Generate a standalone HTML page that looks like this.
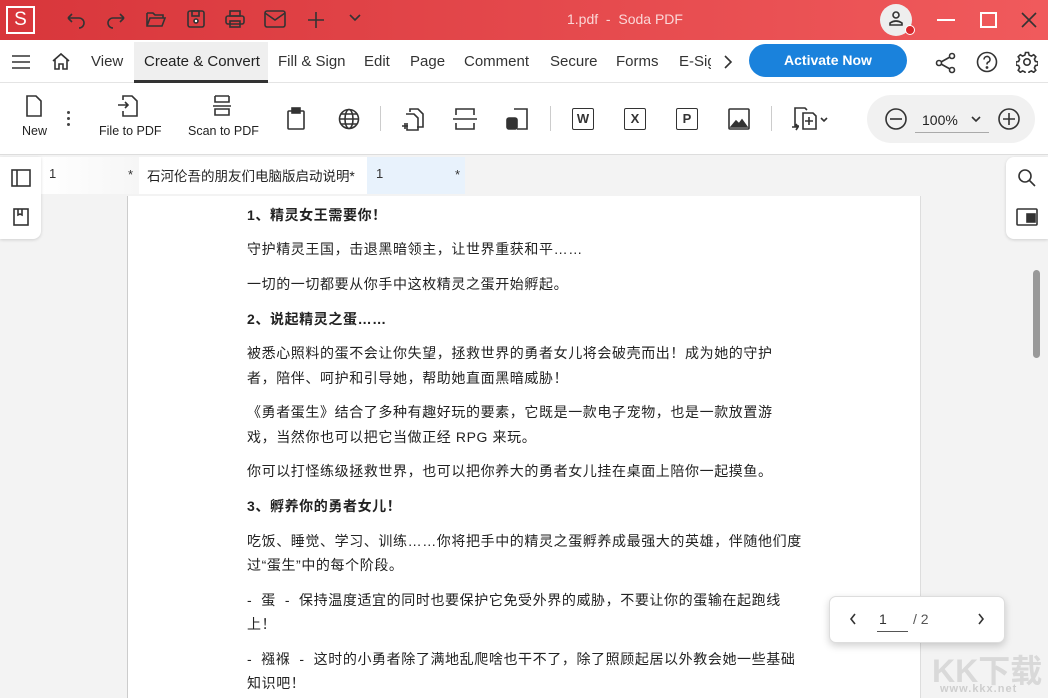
<!DOCTYPE html>
<html><head><meta charset="utf-8"><style>
*{margin:0;padding:0;box-sizing:border-box}
body{width:1048px;height:698px;overflow:hidden;position:relative;font-family:"Liberation Sans","Noto Sans CJK SC",sans-serif;background:#f3f3f3;color:#333}
.abs{position:absolute}
.title{left:0;top:0;width:1048px;height:40px;background:linear-gradient(90deg,#d8363b,#f05a5c)}
.menu{left:0;top:40px;width:1048px;height:43px;background:#fff;border-bottom:1px solid #e4e4e4}
.mi{position:absolute;top:53px;font-size:15px;color:#333;white-space:nowrap}
.tb{left:0;top:83px;width:1048px;height:72px;background:#fff;border-bottom:1px solid #ddd}
.lbl{position:absolute;font-size:12.5px;color:#222;white-space:nowrap}
svg{position:absolute;fill:none;stroke:#333;stroke-width:1.6}
.doc p{position:absolute;left:247px;font-size:14px;letter-spacing:0.6px;color:#222;white-space:nowrap}
.doc b{font-weight:bold}
</style></head><body>
<div class="abs title"></div>
<div class="abs" style="left:6px;top:6px;width:29px;height:28px;border:2px solid #fff;color:#fff;font-size:19px;text-align:center;line-height:24px">S</div>
<svg style="left:64px;top:10px" width="24" height="20" viewBox="0 0 24 20" stroke="#b43034" stroke-width="2"><path d="M4 8h11a5 5 0 0 1 0 10M4 8l4-4M4 8l4 4"/></svg>
<svg style="left:104px;top:10px" width="24" height="20" viewBox="0 0 24 20" stroke="#b43034" stroke-width="2"><path d="M20 8H9a5 5 0 0 0 0 10M20 8l-4-4M20 8l-4 4"/></svg>
<svg style="left:145px;top:9px" width="22" height="20" viewBox="0 0 22 20" stroke="#fff"><path d="M2 4h6l2 2h8v3M2 4v13h15l3-8H5l-3 8"/></svg>
<svg style="left:186px;top:9px" width="20" height="20" viewBox="0 0 20 20" stroke="#fff"><rect x="2" y="2" width="16" height="16" rx="2"/><rect x="6" y="2" width="7" height="5"/><circle cx="10" cy="12" r="2" fill="#fff"/></svg>
<svg style="left:224px;top:9px" width="22" height="20" viewBox="0 0 22 20" stroke="#fff"><rect x="6" y="2" width="10" height="5"/><rect x="2" y="7" width="18" height="8" rx="2"/><rect x="6" y="12" width="10" height="6"/></svg>
<svg style="left:264px;top:10px" width="22" height="18" viewBox="0 0 22 18" stroke="#fff"><rect x="1" y="1" width="20" height="16" rx="2"/><path d="M1 3l10 7 10-7"/></svg>
<svg style="left:306px;top:10px" width="20" height="20" viewBox="0 0 20 20" stroke="#fff" stroke-width="2"><path d="M10 2v16M2 10h16"/></svg>
<svg style="left:348px;top:13px" width="14" height="10" viewBox="0 0 14 10" stroke="#fff" stroke-width="2"><path d="M2 2l5 5 5-5"/></svg>
<div class="abs" style="left:567px;top:11px;font-size:14px;color:#fbd7d7;white-space:nowrap">1.pdf &nbsp;- &nbsp;Soda PDF</div>
<div class="abs" style="left:880px;top:4px;width:32px;height:32px;border-radius:50%;background:#eee"></div>
<svg style="left:887px;top:10px" width="18" height="18" viewBox="0 0 18 18" stroke="#333"><circle cx="9" cy="5" r="3"/><path d="M3 15v-2q6-4 12 0v2z"/></svg>
<div class="abs" style="left:905px;top:25px;width:10px;height:10px;border-radius:50%;background:#d8272c;border:1.5px solid #fff"></div>
<div class="abs" style="left:937px;top:19px;width:18px;height:2px;background:#fff"></div>
<div class="abs" style="left:980px;top:12px;width:17px;height:16px;border:2px solid #fff"></div>
<svg style="left:1020px;top:11px" width="18" height="18" viewBox="0 0 18 18" stroke="#fff" stroke-width="2"><path d="M2 2l14 14M16 2L2 16"/></svg>

<div class="abs menu"></div>
<svg style="left:11px;top:54px" width="20" height="16" viewBox="0 0 20 16" stroke-width="2"><path d="M1 2h18M1 8h18M1 14h18"/></svg>
<svg style="left:51px;top:52px" width="20" height="19" viewBox="0 0 20 19" stroke-width="2"><path d="M2 9l8-7 8 7M4 7v10h4v-5h4v5h4V7"/></svg>
<div class="abs" style="left:134px;top:42px;width:134px;height:41px;background:#efefef;border-bottom:3px solid #333"></div>
<span class="mi" style="left:91px">View</span>
<span class="mi" style="left:144px;color:#222">Create &amp; Convert</span>
<span class="mi" style="left:278px">Fill &amp; Sign</span>
<span class="mi" style="left:364px">Edit</span>
<span class="mi" style="left:410px">Page</span>
<span class="mi" style="left:464px">Comment</span>
<span class="mi" style="left:550px">Secure</span>
<span class="mi" style="left:616px">Forms</span>
<span class="mi" style="left:679px;width:32px;overflow:hidden">E-Sign</span>
<svg style="left:722px;top:54px" width="12" height="16" viewBox="0 0 12 16" stroke-width="2"><path d="M3 2l6 6-6 6"/></svg>
<div class="abs" style="left:749px;top:44px;width:158px;height:33px;border-radius:17px;background:#1a82dc;color:#fff;font-weight:bold;font-size:14px;text-align:center;line-height:32px">Activate Now</div>
<svg style="left:935px;top:52px" width="22" height="22" viewBox="0 0 22 22" stroke-width="1.8"><circle cx="17" cy="4" r="2.5"/><circle cx="4" cy="11" r="2.5"/><circle cx="17" cy="18" r="2.5"/><path d="M6 10l9-5M6 12l9 5"/></svg>
<svg style="left:976px;top:51px" width="22" height="22" viewBox="0 0 22 22" stroke-width="1.8"><circle cx="11" cy="11" r="9.5"/><path d="M8 8.5a3 3 0 1 1 4 2.8c-1 .4-1 1-1 2.2"/><circle cx="11" cy="16.5" r=".6" fill="#333"/></svg>
<svg style="left:1016px;top:51px" width="22" height="22" viewBox="0 0 22 22" stroke-width="1.8"><circle cx="11" cy="11" r="3.2"/><path d="M9.5 1.5h3l.6 2.6 2.3 1 2.3-1.4 2.1 2.1-1.4 2.3 1 2.3 2.6.6v3l-2.6.6-1 2.3 1.4 2.3-2.1 2.1-2.3-1.4-2.3 1-.6 2.6h-3l-.6-2.6-2.3-1-2.3 1.4-2.1-2.1 1.4-2.300-1-2.3-2.6-.6v-3l2.6-.6 1-2.3-1.4-2.3 2.1-2.1 2.3 1.4 2.3-1z"/></svg>

<div class="abs tb"></div>
<svg style="left:25px;top:95px" width="18" height="22" viewBox="0 0 18 22"><path d="M2 1h9l5 5v15H2z"/></svg>
<div class="lbl" style="left:22px;top:124px">New</div>
<div class="abs" style="left:67px;top:117px;width:3px;height:3px;background:#444;border-radius:50%;box-shadow:0 -6px #444,0 6px #444"></div>
<svg style="left:117px;top:95px" width="22" height="22" viewBox="0 0 22 22" stroke-width="1.8"><path d="M6 5V1h9l5 5v15H6v-5M1 10h10M8 7l3 3-3 3"/></svg>
<div class="lbl" style="left:99px;top:124px">File to PDF</div>
<svg style="left:211px;top:95px" width="22" height="22" viewBox="0 0 22 22" stroke-width="1.8"><path d="M4 1h14M4 1v6h14V1M2 11h18M4 14h14v6H4z"/></svg>
<div class="lbl" style="left:188px;top:124px">Scan to PDF</div>
<svg style="left:286px;top:107px" width="20" height="24" viewBox="0 0 20 24" stroke-width="1.8"><rect x="2" y="4" width="16" height="18" rx="1"/><rect x="6" y="1" width="8" height="5" fill="#333"/></svg>
<svg style="left:338px;top:108px" width="22" height="22" viewBox="0 0 22 22" stroke-width="1.6"><circle cx="11" cy="11" r="9.5"/><ellipse cx="11" cy="11" rx="4" ry="9.5"/><path d="M1.5 11h19M3 6h16M3 16h16"/></svg>
<div class="abs" style="left:380px;top:106px;width:1px;height:25px;background:#ccc"></div>
<svg style="left:401px;top:106px" width="26" height="26" viewBox="0 0 26 26" stroke-width="1.8"><path d="M9 6V3h8l5 5v13h-6M5 8h8l4 4v12H6V17M1 20h6M4 17v6"/></svg>
<svg style="left:453px;top:108px" width="24" height="22" viewBox="0 0 24 22" stroke-width="1.8"><path d="M3 7V1h18v6M3 15v6h18v-6M0 11h24"/></svg>
<svg style="left:505px;top:108px" width="24" height="22" viewBox="0 0 24 22" stroke-width="1.8"><path d="M9 1h13v20H12"/><rect x="2" y="10" width="10" height="11" rx="2" fill="#333"/></svg>
<div class="abs" style="left:550px;top:106px;width:1px;height:25px;background:#ccc"></div>
<div class="abs" style="left:572px;top:108px;width:22px;height:22px;border:1.8px solid #333;border-radius:2px;font-size:13px;font-weight:bold;text-align:center;line-height:19px">W</div>
<div class="abs" style="left:624px;top:108px;width:22px;height:22px;border:1.8px solid #333;border-radius:2px;font-size:13px;font-weight:bold;text-align:center;line-height:19px">X</div>
<div class="abs" style="left:676px;top:108px;width:22px;height:22px;border:1.8px solid #333;border-radius:2px;font-size:13px;font-weight:bold;text-align:center;line-height:19px">P</div>
<svg style="left:728px;top:108px" width="22" height="22" viewBox="0 0 22 22" stroke-width="1.8"><rect x="1" y="1" width="20" height="20" rx="1"/><path d="M3 19l5-6 3 3 3-4 5 7z" fill="#333"/></svg>
<div class="abs" style="left:771px;top:106px;width:1px;height:25px;background:#ccc"></div>
<svg style="left:792px;top:106px" width="40" height="26" viewBox="0 0 40 26" stroke-width="1.6"><path d="M7 20H3V2h10l2 2M11 7h10l3 3v13H11zM17 11v8M13 15h8M0 21h6M4 18l2 3-2 3M29 12l3 3 3-3"/></svg>
<div class="abs" style="left:867px;top:95px;width:168px;height:48px;border-radius:24px;background:#f1f1f1"></div>
<svg style="left:884px;top:107px" width="24" height="24" viewBox="0 0 24 24" stroke-width="1.8"><circle cx="12" cy="12" r="10"/><path d="M6 12h12"/></svg>
<div class="abs" style="left:922px;top:112px;font-size:14px;color:#222">100%</div>
<div class="abs" style="left:915px;top:132px;width:74px;height:1px;background:#aaa"></div>
<svg style="left:970px;top:115px" width="12" height="8" viewBox="0 0 12 8" stroke-width="1.8"><path d="M2 2l4 4 4-4"/></svg>
<svg style="left:997px;top:107px" width="24" height="24" viewBox="0 0 24 24" stroke-width="1.8"><circle cx="12" cy="12" r="10"/><path d="M6 12h12M12 6v12"/></svg>

<div class="abs" style="left:0;top:156px;width:1048px;height:40px;background:#f3f3f3"></div>
<div class="abs" style="left:41px;top:157px;width:98px;height:37px;background:linear-gradient(90deg,#fff,#f6f6f6)"></div>
<div class="abs" style="left:139px;top:157px;width:228px;height:37px;background:#fff"></div>
<div class="abs" style="left:367px;top:157px;width:98px;height:37px;background:#e8f2fc"></div>
<div class="abs" style="left:49px;top:166px;font-size:13px">1</div>
<div class="abs" style="left:128px;top:167px;font-size:13px">*</div>
<div class="abs" style="left:147px;top:165px;font-size:13.5px;color:#222;white-space:nowrap">石河伦吾的朋友们电脑版启动说明*</div>
<div class="abs" style="left:376px;top:166px;font-size:13px">1</div>
<div class="abs" style="left:455px;top:167px;font-size:13px">*</div>

<div class="abs" style="left:0;top:157px;width:41px;height:82px;background:#fff;border-radius:0 0 8px 0;box-shadow:0 1px 3px rgba(0,0,0,.15)"></div>
<svg style="left:11px;top:169px" width="20" height="18" viewBox="0 0 20 18" stroke-width="1.8"><rect x="1" y="1" width="18" height="16"/><path d="M6 1v16"/></svg>
<svg style="left:13px;top:208px" width="16" height="18" viewBox="0 0 16 18" stroke-width="1.8"><rect x="1" y="1" width="14" height="16"/><path d="M5 1v6l2-1 2 1V1"/></svg>
<div class="abs" style="left:1006px;top:157px;width:42px;height:82px;background:#fff;border-radius:8px 0 0 8px;box-shadow:0 1px 3px rgba(0,0,0,.15)"></div>
<svg style="left:1017px;top:168px" width="20" height="20" viewBox="0 0 20 20" stroke-width="2"><circle cx="8" cy="8" r="6"/><path d="M12.5 12.5L18 18"/></svg>
<svg style="left:1016px;top:208px" width="22" height="18" viewBox="0 0 22 18" stroke-width="1.8"><rect x="1" y="1" width="20" height="16" rx="1"/><rect x="11" y="6" width="8" height="8" fill="#333"/></svg>

<div class="abs" style="left:127px;top:196px;width:794px;height:502px;background:#fff;border-left:1px solid #ccc;border-right:1px solid #ddd"></div>
<div class="abs" style="left:1033px;top:270px;width:7px;height:88px;border-radius:4px;background:#999"></div>

<div class="doc">
<p style="top:205px"><b>1、精灵女王需要你！</b></p>
<p style="top:239px">守护精灵王国，击退黑暗领主，让世界重获和平……</p>
<p style="top:274px">一切的一切都要从你手中这枚精灵之蛋开始孵起。</p>
<p style="top:309px"><b>2、说起精灵之蛋……</b></p>
<p style="top:343px">被悉心照料的蛋不会让你失望，拯救世界的勇者女儿将会破壳而出！成为她的守护</p>
<p style="top:368px">者，陪伴、呵护和引导她，帮助她直面黑暗威胁！</p>
<p style="top:402px">《勇者蛋生》结合了多种有趣好玩的要素，它既是一款电子宠物，也是一款放置游</p>
<p style="top:427px">戏，当然你也可以把它当做正经 RPG 来玩。</p>
<p style="top:461px">你可以打怪练级拯救世界，也可以把你养大的勇者女儿挂在桌面上陪你一起摸鱼。</p>
<p style="top:496px"><b>3、孵养你的勇者女儿！</b></p>
<p style="top:531px">吃饭、睡觉、学习、训练……你将把手中的精灵之蛋孵养成最强大的英雄，伴随他们度</p>
<p style="top:555px">过“蛋生”中的每个阶段。</p>
<p style="top:590px">- &nbsp;蛋 &nbsp;- &nbsp;保持温度适宜的同时也要保护它免受外界的威胁，不要让你的蛋输在起跑线</p>
<p style="top:614px">上！</p>
<p style="top:649px">- &nbsp;襁褓 &nbsp;- &nbsp;这时的小勇者除了满地乱爬啥也干不了，除了照顾起居以外教会她一些基础</p>
<p style="top:673px">知识吧！</p>
</div>

<div class="abs" style="left:829px;top:596px;width:176px;height:47px;background:#fff;border:1px solid #ddd;border-radius:7px;box-shadow:0 3px 8px rgba(0,0,0,.18)"></div>
<svg style="left:849px;top:613px" width="8" height="12" viewBox="0 0 8 12" stroke="#bbb"><path d="M6 1L2 6l4 5"/></svg>
<div class="abs" style="left:879px;top:611px;font-size:14px;color:#333">1</div>
<div class="abs" style="left:877px;top:631px;width:31px;height:1px;background:#555"></div>
<div class="abs" style="left:913px;top:611px;font-size:14px;color:#555">/ 2</div>
<svg style="left:977px;top:613px" width="8" height="12" viewBox="0 0 8 12" stroke-width="1.8"><path d="M2 1l4 5-4 5"/></svg>
<div class="abs" style="left:932px;top:646px;font-size:32px;font-weight:bold;color:rgba(170,170,170,.35);white-space:nowrap">KK下载</div>
<div class="abs" style="left:940px;top:683px;font-size:11px;font-weight:bold;color:rgba(150,150,150,.4);letter-spacing:1px">www.kkx.net</div>
</body></html>
